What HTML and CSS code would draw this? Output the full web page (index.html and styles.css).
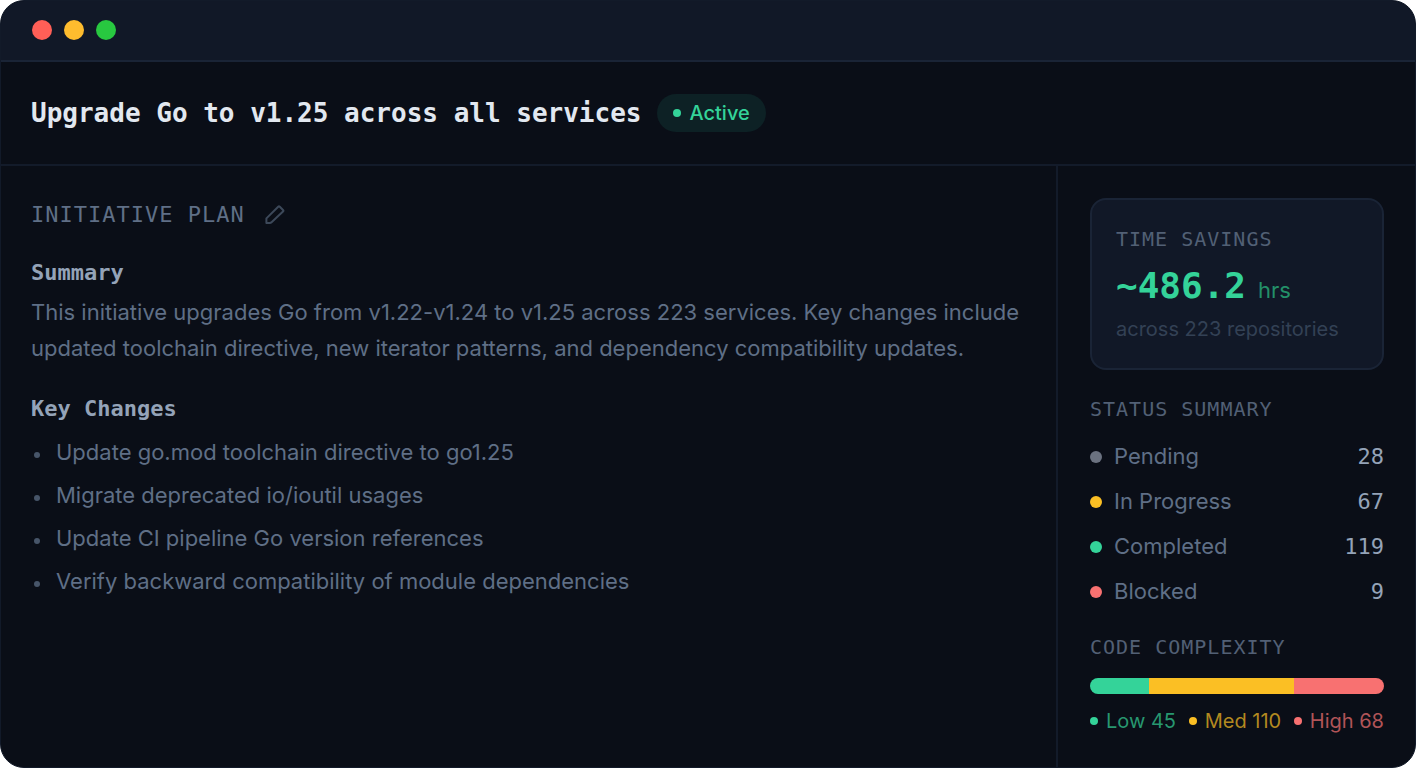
FILE: index.html
```html
<!doctype html>
<html lang="en">
<head>
	<meta charset="UTF-8">
	<title>Upgrade Go to v1.25 across all services</title>
	<link rel="stylesheet" href="styles.css">
</head>
<body>
	<div class="window">
		<div class="titlebar">
			<span class="light red"></span>
			<span class="light yellow"></span>
			<span class="light green"></span>
		</div>
		<header class="header">
			<h1>Upgrade Go to v1.25 across all services</h1>
			<span class="badge">Active</span>
		</header>
		<div class="content">
			<main class="plan">
				<div class="plan-head">
					<h2>INITIATIVE PLAN</h2>
					<button class="edit" type="button" aria-label="Edit plan">
						<svg viewBox="0 0 20 20" width="20" height="20" fill="none" stroke="currentColor" stroke-width="2" stroke-linejoin="round">
							<path d="M1.4 18V13.4L13.2 1.8Q14 1 14.8 1.8L18 5Q18.8 5.8 18 6.6L6.8 17Q5.8 18 4.6 18Z"/>
						</svg>
					</button>
				</div>
				<h3>Summary</h3>
				<p>This initiative upgrades Go from v1.22-v1.24 to v1.25 across 223 services. Key changes include updated toolchain directive, new iterator patterns, and dependency compatibility updates.</p>
				<h3>Key Changes</h3>
				<ul class="changes">
					<li>Update go.mod toolchain directive to go1.25</li>
					<li>Migrate deprecated io/ioutil usages</li>
					<li>Update CI pipeline Go version references</li>
					<li>Verify backward compatibility of module dependencies</li>
				</ul>
			</main>
			<aside class="sidebar">
				<section class="card">
					<h2>TIME SAVINGS</h2>
					<div class="value"><strong>~486.2</strong><span>hrs</span></div>
					<div class="note">across 223 repositories</div>
				</section>
				<section>
					<h2>STATUS SUMMARY</h2>
					<ul class="status">
						<li class="pending"><span>Pending</span><b>28</b></li>
						<li class="progress"><span>In Progress</span><b>67</b></li>
						<li class="completed"><span>Completed</span><b>119</b></li>
						<li class="blocked"><span>Blocked</span><b>9</b></li>
					</ul>
				</section>
				<section>
					<h2>CODE COMPLEXITY</h2>
					<div class="bar">
						<div class="low" style="flex-grow: 45"></div>
						<div class="med" style="flex-grow: 110"></div>
						<div class="high" style="flex-grow: 68"></div>
					</div>
					<ul class="legend">
						<li class="completed"><span>Low 45</span></li>
						<li class="progress"><span>Med 110</span></li>
						<li class="blocked"><span>High 68</span></li>
					</ul>
				</section>
			</aside>
		</div>
	</div>
</body>
</html>
```
FILE: styles.css
```css
*{
	margin: 0;
	padding: 0;
	box-sizing: border-box;
}
body{
	background: #fff;
	color: #5f6f86;
	font: 22px/36px Inter, "Liberation Sans", sans-serif;
}
ul{
	list-style: none;
}
h1, h2, h3, .value strong, .status b{
	font-family: "DejaVu Sans Mono", "Liberation Mono", monospace;
}
.window{
	min-height: 100vh;
	display: flex;
	flex-direction: column;
	background: #0a0e17;
	border: 1px solid #121a29;
	border-radius: 24px;
	overflow: hidden;
}

/* top */
.titlebar{
	display: flex;
	gap: 12px;
	padding: 19px 31px 20px;
	background: #111827;
	border-bottom: 2px solid #1a2436;
}
.light{
	width: 20px;
	height: 20px;
	border-radius: 50%;
}
.red{
	background: #ff5f57;
}
.yellow{
	background: #febc2e;
}
.green{
	background: #28c840;
}
.header{
	display: flex;
	align-items: center;
	gap: 16px;
	padding: 32px 30px;
	border-bottom: 2px solid #131b2a;
}
h1{
	color: #e2e8f0;
	font-size: 26px;
	line-height: 38px;
}
.badge{
	display: flex;
	align-items: center;
	gap: 8px;
	height: 38px;
	padding: 0 16px;
	border-radius: 19px;
	background: #0d2125;
	color: #34d399;
	font-size: 20px;
	font-weight: 500;
}
.badge::before{
	content: "";
	width: 8px;
	height: 8px;
	border-radius: 50%;
	background: #34d399;
}

.content{
	flex: 1;
	display: flex;
}

/* plan */
.plan{
	flex: 1;
	padding: 32px 30px;
}
.plan-head{
	display: flex;
	align-items: center;
	gap: 20px;
	margin-bottom: 24px;
}
.plan-head h2{
	font-size: 22px;
	line-height: 34px;
	font-weight: 400;
	letter-spacing: 1px;
}
.edit{
	display: flex;
	border: 0;
	background: none;
	color: #3c4859;
	cursor: pointer;
}
h3{
	color: #94a3b8;
	font-size: 22px;
	line-height: 34px;
	margin-bottom: 4px;
}
.plan p{
	margin-bottom: 26px;
}
.changes{
	display: grid;
	gap: 7px;
	padding-top: 4px;
}
.changes li{
	display: flex;
	align-items: center;
	gap: 16px;
	padding-left: 3px;
}
.changes li::before{
	content: "";
	width: 6px;
	height: 6px;
	margin-top: 6px;
	border-radius: 50%;
	background: #475569;
}

/* sidebar */
.sidebar{
	display: flex;
	flex-direction: column;
	gap: 24px;
	width: 359px;
	padding: 32px 31px 31px 32px;
	border-left: 2px solid #131b2a;
}
.sidebar h2{
	color: #526075;
	font-size: 20px;
	line-height: 30px;
	font-weight: 400;
	letter-spacing: 1px;
}
.card{
	padding: 24px;
	background: #111827;
	border: 2px solid #1a2436;
	border-radius: 16px;
}
.value{
	display: flex;
	align-items: baseline;
	gap: 12px;
	height: 60px;
	padding-top: 8px;
	line-height: 48px;
}
.value strong{
	color: #34d399;
	font-size: 36px;
}
.value span{
	color: #239069;
}
.note{
	color: #334155;
	font-size: 20px;
	line-height: 30px;
}
.status{
	display: grid;
	gap: 12px;
	padding-top: 16px;
}
.status li{
	display: flex;
	align-items: center;
	gap: 12px;
	line-height: 33px;
}
.status b{
	margin-left: auto;
	color: #94a3b8;
	font-weight: 400;
}
.status li::before, .legend li::before{
	content: "";
	width: 12px;
	height: 12px;
	border-radius: 50%;
	background: #34d399;
}
.pending::before{
	background: #6b7280 !important;
}
.progress::before{
	background: #fbbf24 !important;
}
.blocked::before{
	background: #f87171 !important;
}
.bar{
	display: flex;
	height: 16px;
	margin: 16px 0 12px;
	border-radius: 8px;
	overflow: hidden;
}
.low{
	background: #34d399;
}
.med{
	background: #fbbf24;
}
.high{
	background: #f87171;
}
.legend{
	display: flex;
	justify-content: space-between;
	font-size: 20px;
	line-height: 30px;
	white-space: nowrap;
}
.legend li{
	display: flex;
	align-items: center;
	gap: 8px;
}
.legend li::before{
	width: 8px;
	height: 8px;
}
.legend .completed{
	color: #279770;
}
.legend .progress{
	color: #b38920;
}
.legend .blocked{
	color: #b15457;
}
```
